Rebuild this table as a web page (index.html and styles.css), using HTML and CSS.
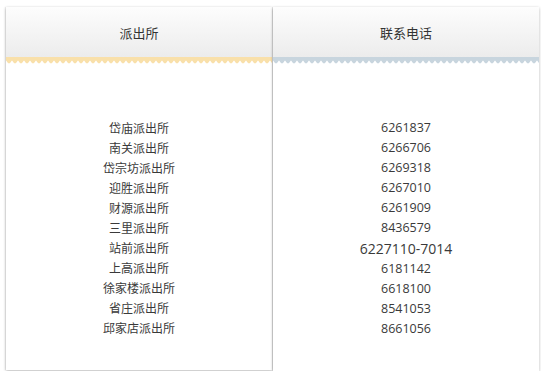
FILE: index.html
```html
<!DOCTYPE html>
<html lang="zh">
<head>
<meta charset="utf-8">
<link rel="stylesheet" href="styles.css">
</head>
<body>
<div class="board">
  <div class="card">
    <div class="head">派出所</div>
    <div class="wave wave-orange"></div>
    <ul class="rows">
      <li>岱庙派出所</li>
      <li>南关派出所</li>
      <li>岱宗坊派出所</li>
      <li>迎胜派出所</li>
      <li>财源派出所</li>
      <li>三里派出所</li>
      <li>站前派出所</li>
      <li>上高派出所</li>
      <li>徐家楼派出所</li>
      <li>省庄派出所</li>
      <li>邱家店派出所</li>
    </ul>
  </div>
  <div class="card">
    <div class="head">联系电话</div>
    <div class="wave wave-blue"></div>
    <ul class="rows nums">
      <li>6261837</li>
      <li>6266706</li>
      <li>6269318</li>
      <li>6267010</li>
      <li>6261909</li>
      <li>8436579</li>
      <li class="big">6227110-7014</li>
      <li>6181142</li>
      <li>6618100</li>
      <li>8541053</li>
      <li>8661056</li>
    </ul>
  </div>
</div>
</body>
</html>
```

FILE: styles.css
```css
html, body {
  margin: 0;
  padding: 0;
  background: #fff;
}
body {
  font-family: "Noto Sans CJK SC", "Noto Sans", sans-serif;
  color: #333;
}
.board {
  display: flex;
  align-items: flex-start;
  gap: 1px;
  padding: 7px 0 0 6px;
}
.card {
  width: 266px;
  background: #fff;
  box-shadow: 0 1px 3px rgba(0, 0, 0, 0.28), -1px 0 1px rgba(0, 0, 0, 0.06);
}
.head {
  height: 50px;
  display: flex;
  align-items: center;
  justify-content: center;
  font-size: 13px;
  color: #333;
  background: linear-gradient(to bottom, #fdfdfd, #ececec);
}
.wave {
  height: 7px;
  background-repeat: repeat-x;
  background-size: 6px 7px;
}
.wave-orange {
  background-image: url("data:image/svg+xml,%3Csvg xmlns='http://www.w3.org/2000/svg' width='6' height='7'%3E%3Cpath d='M0 0H6V3.5C5 4 4.5 6.5 3 6.5C1.5 6.5 1 4 0 3.5Z' fill='%23f9e0aa'/%3E%3C/svg%3E");
}
.wave-blue {
  background-image: url("data:image/svg+xml,%3Csvg xmlns='http://www.w3.org/2000/svg' width='6' height='7'%3E%3Cpath d='M0 0H6V3.5C5 4 4.5 6.5 3 6.5C1.5 6.5 1 4 0 3.5Z' fill='%23c8d5de'/%3E%3C/svg%3E");
}
.rows {
  list-style: none;
  margin: 0;
  padding: 54px 0 32px;
  text-align: center;
  font-size: 12px;
  line-height: 20px;
  color: #3a3a3a;
}
.nums {
  font-family: "Open Sans", "Noto Sans", sans-serif;
  font-size: 12.5px;
}
.nums .big {
  font-size: 14px;
  line-height: 21px;
}
```
